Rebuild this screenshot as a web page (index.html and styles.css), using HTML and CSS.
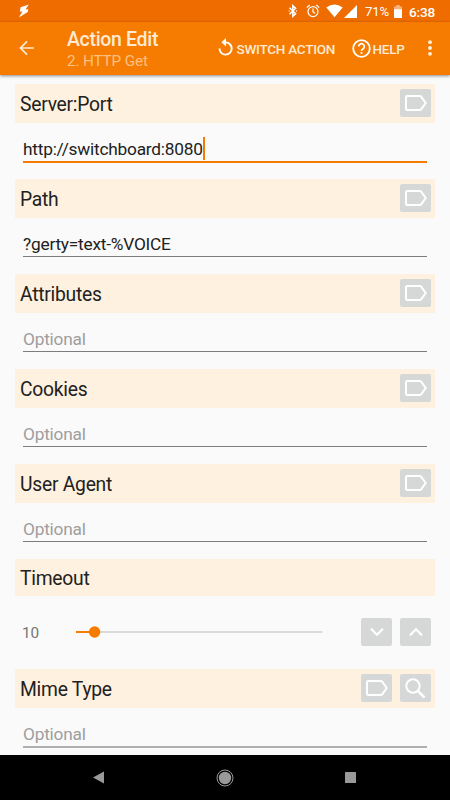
FILE: index.html
```
<!DOCTYPE html>
<html lang="en">
<head>
<meta charset="utf-8">
<title>Action Edit</title>
<link rel="stylesheet" href="styles.css">
</head>
<body>
<svg class="defs" width="0" height="0" aria-hidden="true">
  <symbol id="tag" viewBox="0 0 22 16"><path d="M2.2 1h12.6q.8 0 1.3.7L20.7 8l-4.6 6.3q-.5.7-1.3.7H2.2Q1 15 1 13.8V2.2Q1 1 2.2 1z" fill="none" stroke="#fff" stroke-width="2"/></symbol>
</svg>
<div class="status">
  <svg class="bolt" width="12" height="14" viewBox="0 0 12 14"><path d="M10.8.6 2.6 3.2 1.8 7.6 4.4 7.4.8 13.6 9.8 8 10.2 5.2 7.6 5.4z" fill="#fff"/></svg>
  <div class="status-right">
    <svg class="bt" width="10" height="14" viewBox="0 0 10 14"><path d="M1.5 3.8 7.6 9.7 4.8 12.3V1.7l2.8 2.6-6.1 5.9M.8 7h.8M8.2 7H9" fill="none" stroke="#fff" stroke-width="1.5"/></svg>
    <svg class="alarm" width="14" height="14" viewBox="0 0 14 14"><g fill="none" stroke="#fff" stroke-width="1.2"><circle cx="7" cy="7.6" r="5"/><path d="M7 4.5v3.4l2.2 1.4M.8 3.6 3.7 1M13.2 3.6 10.3 1"/></g></svg>
    <svg class="wifi" width="17" height="14" viewBox="0 0 17 14"><path d="M.3 3.6Q8.5-2.4 16.7 3.6L8.5 13.3z" fill="#fff"/></svg>
    <svg class="cell" width="13" height="13" viewBox="0 0 13 13"><path d="M13 0v13H0z" fill="#fff"/></svg>
    <span class="percent">71%</span>
    <svg class="battery" width="8" height="13" viewBox="0 0 8 13"><path d="M0 1.5h2.3V0h3.4v1.5H8V5H0z" fill="#f8b27a"/><path d="M0 4.3h8V13H0z" fill="#fff"/></svg>
    <span class="clock">6:38</span>
  </div>
</div>
<header class="appbar">
  <svg class="back" width="16" height="16" viewBox="0 0 16 16"><path d="M15 8H2M8 1.4 1.5 8 8 14.6" fill="none" stroke="#ffead3" stroke-width="1.7"/></svg>
  <div class="titles">
    <div class="title">Action Edit</div>
    <div class="subtitle">2. HTTP Get</div>
  </div>
  <svg class="switch-icon" width="16" height="18" viewBox="0 0 16 18"><path d="M7.7 4.4A6.1 6.1 0 1 1 1.5 10.5" fill="none" stroke="#fff" stroke-width="1.9"/><path d="M8 0v8.6L3.4 4.3z" fill="#fff"/></svg>
  <span class="action switch">SWITCH ACTION</span>
  <svg class="help-icon" width="19" height="19" viewBox="0 0 19 19"><circle cx="9.5" cy="9.5" r="8.3" fill="none" stroke="#fff" stroke-width="1.8"/><path d="M6.7 7.6a2.8 2.8 0 1 1 4.7 2c-1 .9-1.9 1.1-1.9 2.5" fill="none" stroke="#fff" stroke-width="1.7"/><path d="M8.6 13.1h1.8v1.8H8.6z" fill="#fff"/></svg>
  <span class="action help">HELP</span>
  <svg class="more" width="4" height="16" viewBox="0 0 4 16"><g fill="#fff0df"><circle cx="2" cy="2.2" r="1.9"/><circle cx="2" cy="8" r="1.9"/><circle cx="2" cy="13.8" r="1.9"/></g></svg>
</header>
<main class="form">
  <section class="group">
    <div class="head"><h2 class="label">Server:Port</h2><span class="btn"><svg width="22" height="16"><use href="#tag"/></svg></span></div>
    <div class="field focused"><span>http://switchboard:8080</span><i class="caret"></i></div>
  </section>
  <section class="group">
    <div class="head"><h2 class="label">Path</h2><span class="btn"><svg width="22" height="16"><use href="#tag"/></svg></span></div>
    <div class="field">?gerty=text-%VOICE</div>
  </section>
  <section class="group">
    <div class="head"><h2 class="label">Attributes</h2><span class="btn"><svg width="22" height="16"><use href="#tag"/></svg></span></div>
    <div class="field hint">Optional</div>
  </section>
  <section class="group">
    <div class="head"><h2 class="label">Cookies</h2><span class="btn"><svg width="22" height="16"><use href="#tag"/></svg></span></div>
    <div class="field hint">Optional</div>
  </section>
  <section class="group">
    <div class="head"><h2 class="label">User Agent</h2><span class="btn"><svg width="22" height="16"><use href="#tag"/></svg></span></div>
    <div class="field hint">Optional</div>
  </section>
  <section class="group timeout">
    <div class="head short"><h2 class="label">Timeout</h2></div>
    <div class="slider-row">
      <span class="value">10</span>
      <svg class="slider" width="248" height="12" viewBox="0 0 248 12"><path d="M1 6h246.5" stroke="#d9d9d9" stroke-width="2"/><path d="M1 6h19" stroke="#f57c00" stroke-width="2"/><circle cx="19.6" cy="6" r="5.7" fill="#f57c00"/></svg>
      <span class="btn"><svg width="14" height="10" viewBox="0 0 14 10"><path d="M1 1.8 7 7.8l6-6" fill="none" stroke="#fff" stroke-width="2.2"/></svg></span>
      <span class="btn"><svg width="14" height="10" viewBox="0 0 14 10"><path d="M1 8.2 7 2.2l6 6" fill="none" stroke="#fff" stroke-width="2.2"/></svg></span>
    </div>
  </section>
  <section class="group">
    <div class="head"><h2 class="label">Mime Type</h2><span class="btn"><svg width="22" height="16"><use href="#tag"/></svg></span><span class="btn"><svg width="21" height="21" viewBox="0 0 21 21"><circle cx="8" cy="8" r="6.7" fill="none" stroke="#fff" stroke-width="2"/><path d="m12.8 12.8 6.8 6.8" stroke="#fff" stroke-width="2.6"/></svg></span></div>
    <div class="field hint last">Optional</div>
  </section>
</main>
<nav class="nav">
  <svg width="11" height="13" viewBox="0 0 11 13"><path d="M11 .5v12L0 6.5z" fill="#999"/></svg>
  <svg class="home" width="18" height="18" viewBox="0 0 18 18"><circle cx="9" cy="9" r="6.2" fill="#999"/><circle cx="9" cy="9" r="8" fill="none" stroke="#999" stroke-width="1"/></svg>
  <svg width="11" height="11" viewBox="0 0 11 11"><rect width="11" height="11" rx=".5" fill="#999"/></svg>
</nav>
</body>
</html>
```
FILE: styles.css
```
* { box-sizing: border-box; }
body {
  margin: 0;
  width: 450px;
  height: 800px;
  overflow: hidden;
  display: flex;
  flex-direction: column;
  background: #fafafa;
  color: #212121;
  font-family: Roboto, "Liberation Sans", sans-serif;
}
svg { display: block; flex: none; }
.defs { position: absolute; }
.status {
  flex: none;
  height: 22px;
  display: flex;
  align-items: center;
  justify-content: space-between;
  padding: 0 15px 0 18px;
  background: #ef6c00;
  color: #fff;
  line-height: 22px;
}
.status-right { display: flex; align-items: center; white-space: nowrap; }
.alarm { margin-left: 8px; }
.wifi { margin-left: 6px; }
.cell { margin-left: 1px; }
.percent { width: 24px; margin-left: 8px; font-size: 13.2px; letter-spacing: -.1px; padding-top: 1px; }
.battery { margin-left: 5px; }
.clock { width: 26px; margin-left: 7px; font-weight: 500; font-size: 13.6px; letter-spacing: -.15px; padding-top: 1px; }
.appbar {
  flex: none;
  height: 52.5px;
  display: flex;
  align-items: center;
  padding: 0 18px 0 19px;
  background: #f57c00;
  box-shadow: 0 1px 3px rgba(0, 0, 0, .45);
  white-space: nowrap;
}
.titles { width: 149px; margin-left: 32px; padding-top: 4px; }
.title { font-size: 19.5px; line-height: 23px; font-weight: 500; letter-spacing: -.32px; color: #ffead3; }
.subtitle { font-size: 15.3px; line-height: 21px; letter-spacing: -.15px; color: #fbc083; }
.action { font-size: 13.5px; font-weight: 500; letter-spacing: -.25px; color: #ffead3; padding-top: 1px; }
.switch-icon { margin-left: 2px; margin-top: -3px; }
.switch { width: 99px; margin-left: 2.5px; }
.help-icon { margin-left: 16px; }
.help { width: 32px; margin-left: 2px; }
.more { margin-left: auto; }
.form { flex: none; height: 680.5px; padding: 9.5px 15px 0; overflow: hidden; }
.group { height: 95px; }
.head {
  height: 38.7px;
  display: flex;
  align-items: center;
  gap: 8px;
  padding: 0 4px 0 5px;
  background: #fff1df;
}
.short { height: 36.7px; }
.label {
  flex: 1;
  margin: 0;
  padding-top: 3px;
  font-size: 19.3px;
  line-height: 24px;
  font-weight: 400;
  letter-spacing: -.25px;
}
.btn {
  flex: none;
  width: 31px;
  height: 28px;
  display: flex;
  align-items: center;
  justify-content: center;
  border-radius: 2px;
  background: #d6d7d7;
}
.field {
  display: flex;
  align-items: flex-start;
  height: 39.3px;
  margin: 0 8px;
  padding-top: 15px;
  font-size: 17.3px;
  line-height: 22px;
  letter-spacing: -.22px;
  border-bottom: 1px solid #7d7d7d;
}
.focused { height: 40.3px; border-bottom: 2px solid #f57c00; }
.hint { color: #9e9e9e; }
.last { height: 40.3px; border-bottom: 2px solid #b0b0b0; }
.caret { width: 2px; height: 23px; margin-top: -1px; background: #f57c00; }
.timeout { height: 110px; }
.slider-row { height: 73.3px; display: flex; align-items: center; padding: 0 4px 0 7px; }
.value { width: 53px; font-size: 15.3px; letter-spacing: -.2px; color: #757575; padding-top: 1px; }
.slider { margin-right: 38px; }
.slider-row .btn + .btn { margin-left: 8px; }
.nav {
  flex: none;
  height: 45px;
  display: flex;
  align-items: center;
  padding-left: 93px;
  gap: 111.5px;
  background: #000;
}
```
